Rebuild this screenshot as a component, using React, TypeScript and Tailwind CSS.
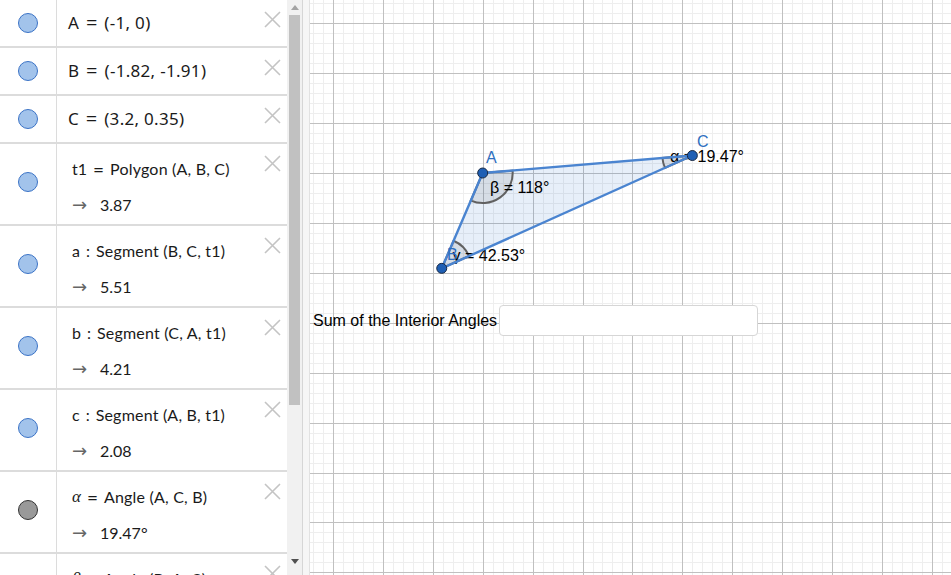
import React from 'react';

// graphics view geometry (local coords inside the canvas, which starts at x=310)
const S = 49.92;
const OX = 222.6;
const OY = 173;
const W = 641;
const H = 575;

type P = [number, number];
const toPx = (x: number, y: number): P => [OX + x * S, OY - y * S];

const A = toPx(-1, 0);
const B = toPx(-1.82, -1.91);
const C = toPx(3.2, 0.35);

function sector(v: P, p1: P, p2: P, r = 30) {
  const u = [p1[0] - v[0], p1[1] - v[1]];
  const w = [p2[0] - v[0], p2[1] - v[1]];
  const lu = Math.hypot(u[0], u[1]);
  const lw = Math.hypot(w[0], w[1]);
  const s = [v[0] + (u[0] / lu) * r, v[1] + (u[1] / lu) * r];
  const e = [v[0] + (w[0] / lw) * r, v[1] + (w[1] / lw) * r];
  const sweep = u[0] * w[1] - u[1] * w[0] > 0 ? 1 : 0;
  return `M ${v[0]} ${v[1]} L ${s[0]} ${s[1]} A ${r} ${r} 0 0 ${sweep} ${e[0]} ${e[1]} Z`;
}

function Grid() {
  const minor: number[] = [];
  const major: number[] = [];
  const step = S / 5;
  for (let k = Math.ceil(-OX / step); OX + k * step <= W; k++) {
    const x = Math.round(OX + k * step) + 0.5;
    (((k % 5) + 5) % 5 === 0 ? major : minor).push(x);
  }
  const minorY: number[] = [];
  const majorY: number[] = [];
  for (let k = Math.ceil(-OY / step); OY + k * step <= H; k++) {
    const y = Math.round(OY + k * step) + 0.5;
    (((k % 5) + 5) % 5 === 0 ? majorY : minorY).push(y);
  }
  return (
    <g shapeRendering="crispEdges">
      {minor.map((x) => <line key={'mx' + x} x1={x} y1={0} x2={x} y2={H} stroke="#eeeeee" />)}
      {minorY.map((y) => <line key={'my' + y} x1={0} y1={y} x2={W} y2={y} stroke="#eeeeee" />)}
      {major.map((x) => <line key={'Mx' + x} x1={x} y1={0} x2={x} y2={H} stroke="#c0c0c0" />)}
      {majorY.map((y) => <line key={'My' + y} x1={0} y1={y} x2={W} y2={y} stroke="#c0c0c0" />)}
    </g>
  );
}

function Marble({ gray }: { gray?: boolean }) {
  return (
    <span
      className={`block h-[20px] w-[20px] rounded-full border ${gray ? 'border-[#333333] bg-[#999999]' : 'border-[#3b73c6] bg-[#a2c3eb]'}`}
    />
  );
}

function CloseX() {
  return (
    <svg width="17" height="17" viewBox="0 0 17 17" className="shrink-0">
      <path d="M1 1 L16 16 M16 1 L1 16" stroke="#c4c4c4" strokeWidth="1.6" fill="none" />
    </svg>
  );
}

const pointRows = [
  { name: 'A', value: '(-1, 0)' },
  { name: 'B', value: '(-1.82, -1.91)' },
  { name: 'C', value: '(3.2, 0.35)' },
];

const defRows = [
  { name: 't1', op: '=', def: 'Polygon (A, B, C)', value: '3.87' },
  { name: 'a', op: ':', def: 'Segment (B, C, t1)', value: '5.51' },
  { name: 'b', op: ':', def: 'Segment (C, A, t1)', value: '4.21' },
  { name: 'c', op: ':', def: 'Segment (A, B, t1)', value: '2.08' },
  { name: 'α', op: '=', def: 'Angle (A, C, B)', value: '19.47°', gray: true, greek: true },
  { name: 'β', op: '=', def: 'Angle (B, A, C)', value: '118°', gray: true, greek: true },
];

function PointRow({ name, value }: { name: string; value: string }) {
  return (
    <div className="flex h-[48px] shrink-0 border-b-2 border-[#dcdcdc]">
      <div className="flex w-[57px] shrink-0 items-center justify-center border-r border-[#dcdcdc]">
        <Marble />
      </div>
      <div className="flex flex-1 items-start pr-[6px]">
        <div className="flex h-[46px] flex-1 items-center pl-[11px] font-['Noto_Sans',sans-serif] text-[17px] text-[#1a1a1a]">
          <span>{name}</span>
          <span className="mx-[7px] text-[20px] leading-none">=</span>
          <span className="tracking-[0.3px]">{value}</span>
        </div>
        <div className="mt-[11px]">
          <CloseX />
        </div>
      </div>
    </div>
  );
}

function DefRow(r: (typeof defRows)[number]) {
  return (
    <div className="flex h-[82px] shrink-0 border-b-2 border-[#dcdcdc]">
      <div className="flex w-[57px] shrink-0 items-center justify-center border-r border-[#dcdcdc] pb-[4px]">
        <Marble gray={r.gray} />
      </div>
      <div className="flex flex-1 items-start pr-[6px]">
        <div className="flex flex-1 flex-col gap-[12px] pl-[15px] pt-[13px] font-['Lato',sans-serif] text-[16px] text-[#1a1a1a]">
          <div className="flex h-[24px] items-center whitespace-pre">
            <span className={r.greek ? "font-['Liberation_Serif',serif] italic text-[17px]" : ''}>{r.name}</span>
            <span className={r.op === '=' ? 'mx-[6px] text-[19px] leading-none' : 'mx-[6px]'}>{r.op}</span>
            <span className="tracking-[0.2px]">{r.def}</span>
          </div>
          <div className="flex h-[24px] items-center">
            <span className="w-[28px] font-['DejaVu_Sans',sans-serif] text-[18px] leading-none text-[#666666]">→</span>
            <span>{r.value}</span>
          </div>
        </div>
        <div className="mt-[11px]">
          <CloseX />
        </div>
      </div>
    </div>
  );
}

export default function App() {
  return (
    <div className="flex h-[575px] w-[951px] overflow-hidden bg-white">
      {/* algebra view */}
      <div className="flex w-[287px] shrink-0 flex-col overflow-hidden">
        {pointRows.map((r) => (
          <PointRow key={r.name} {...r} />
        ))}
        {defRows.map((r) => (
          <DefRow key={r.name} {...r} />
        ))}
      </div>

      {/* scrollbar */}
      <div className="flex w-[15px] shrink-0 flex-col bg-[#f1f1f1]">
        <div className="flex h-[15px] items-center justify-center">
          <svg width="8" height="5" viewBox="0 0 8 5">
            <path d="M0 5 L4 0 L8 5 Z" fill="#a3a3a3" />
          </svg>
        </div>
        <div className="mx-[2px] h-[390px] bg-[#c1c1c1]" />
        <div className="flex-1" />
        <div className="mb-[6px] flex h-[15px] items-center justify-center">
          <svg width="8" height="5" viewBox="0 0 8 5">
            <path d="M0 0 L8 0 L4 5 Z" fill="#505050" />
          </svg>
        </div>
      </div>
      <div className="w-px shrink-0 bg-[#d6d6d6]" />
      <div className="w-[6px] shrink-0 bg-[#f6f6f6]" />
      <div className="w-px shrink-0 bg-[#e2e2e2]" />

      {/* graphics view */}
      <div className="relative flex-1 overflow-hidden">
        <svg width={W} height={H} className="block">
          <Grid />
          <polygon points={`${A} ${B} ${C}`} fill="rgba(21,101,192,0.1)" stroke="none" />
          <g fill="rgba(64,64,64,0.1)" stroke="#616161" strokeWidth="2">
            <path d={sector(A, B, C)} />
            <path d={sector(B, C, A)} />
            <path d={sector(C, A, B)} />
          </g>
          <g fontFamily="'Liberation Sans', Arial, sans-serif" fontSize="16" fill="#000">
            <text x={180} y={192.5}>β = 118°</text>
            <text x={142.5} y={261}>γ = 42.53°</text>
            <text x={360} y={161.5}>α = 19.47°</text>
          </g>
          <g stroke="#4a84d0" strokeWidth="2.4" strokeLinecap="round">
            <line x1={A[0]} y1={A[1]} x2={B[0]} y2={B[1]} />
            <line x1={B[0]} y1={B[1]} x2={C[0]} y2={C[1]} />
            <line x1={C[0]} y1={C[1]} x2={A[0]} y2={A[1]} />
          </g>
          <g fontFamily="'Liberation Sans', Arial, sans-serif" fontSize="16" fill="#2f6fc0">
            <text x={176} y={163}>A</text>
            <text x={137} y={260}>B</text>
            <text x={387} y={147}>C</text>
          </g>
          <g fill="#1f5fb4" stroke="#1a2a44" strokeWidth="1">
            {[A, B, C].map((p, i) => (
              <circle key={i} cx={p[0]} cy={p[1]} r="5" />
            ))}
          </g>
        </svg>

        <div className="absolute left-[3px] top-[312px] font-['Liberation_Sans',Arial,sans-serif] text-[16px] leading-[18px] text-black">
          Sum of the Interior Angles
        </div>
        <input
          type="text"
          className="absolute left-[189px] top-[305px] h-[31px] w-[259px] rounded-[4px] border border-[#d6d6d6] bg-white outline-none"
        />
      </div>
    </div>
  );
}
